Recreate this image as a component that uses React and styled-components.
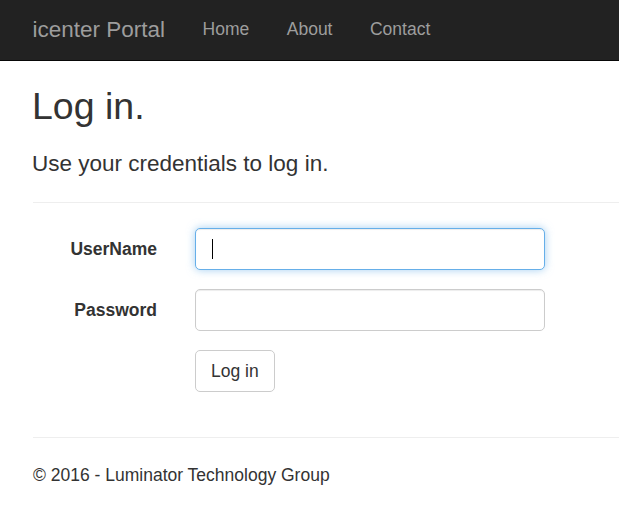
import styled, { createGlobalStyle } from "styled-components";

const GlobalStyle = createGlobalStyle`
  html, body {
    margin: 0;
    padding: 0;
    background: #fff;
  }
  body {
    font-family: "Liberation Sans", Arial, sans-serif;
    font-size: 17.5px;
    color: #333;
  }
`;

export default function App() {
  return (
    <>
      <GlobalStyle />
      <Navbar>
        <Brand href="#">icenter Portal</Brand>
        <NavLink href="#">Home</NavLink>
        <NavLink href="#">About</NavLink>
        <NavLink href="#">Contact</NavLink>
      </Navbar>
      <Main>
        <Title>Log in.</Title>
        <Subtitle>Use your credentials to log in.</Subtitle>
        <Rule />
        <Form onSubmit={(e) => e.preventDefault()}>
          <FormRow>
            <Label htmlFor="user">UserName</Label>
            <InputWrap>
              <Input id="user" type="text" $focused />
              <Caret />
            </InputWrap>
          </FormRow>
          <FormRow>
            <Label htmlFor="pass">Password</Label>
            <Input id="pass" type="password" />
          </FormRow>
          <FormRow>
            <Label as="span" />
            <Button type="submit">Log in</Button>
          </FormRow>
        </Form>
        <FooterRule />
        <Footer>© 2016 - Luminator Technology Group</Footer>
      </Main>
    </>
  );
}

const Navbar = styled.nav`
  height: 61px;
  box-sizing: border-box;
  background: #222;
  border-bottom: 1px solid #080808;
  display: flex;
  align-items: center;
  padding: 0 0 0 32.5px;
`;

const Brand = styled.a`
  font-size: 22.5px;
  line-height: 22.5px;
  color: #9d9d9d;
  text-decoration: none;
  margin-right: 18.75px;
`;

const NavLink = styled.a`
  font-size: 17.5px;
  line-height: 17.5px;
  color: #9d9d9d;
  text-decoration: none;
  padding: 0 18.75px;
`;

const Main = styled.main`
  padding-left: 33px;
`;

const Title = styled.h1`
  font-size: 37.5px;
  font-weight: 500;
  line-height: 1.1;
  margin: 25.4px 0 0 -1px;
`;

const Subtitle = styled.h4`
  font-size: 22.5px;
  font-weight: 500;
  line-height: 1.1;
  margin: 24.2px 0 0 -1px;
`;

const Rule = styled.hr`
  border: 0;
  border-top: 1px solid #eee;
  margin: 25.4px 0 0;
`;

const Form = styled.form`
  display: flex;
  flex-direction: column;
  gap: 19px;
  margin-top: 25px;
`;

const FormRow = styled.div`
  display: flex;
  align-items: center;
  gap: 38px;
`;

const Label = styled.label`
  width: 124px;
  text-align: right;
  font-weight: bold;
  font-size: 17.5px;
  padding-top: 1px;
`;

const InputWrap = styled.div`
  position: relative;
`;

const Input = styled.input`
  display: block;
  width: 350px;
  height: 42px;
  box-sizing: border-box;
  padding: 7px 15px;
  font-family: inherit;
  font-size: 17.5px;
  color: #555;
  background: #fff;
  border: 1px solid ${(p) => (p.$focused ? "#66afe9" : "#ccc")};
  border-radius: 5px;
  box-shadow: ${(p) =>
    p.$focused
      ? "inset 0 1px 1px rgba(0,0,0,.075), 0 0 8px rgba(102,175,233,.6)"
      : "inset 0 1px 1px rgba(0,0,0,.075)"};
  outline: none;
`;

const Caret = styled.span`
  position: absolute;
  left: 17px;
  top: 11px;
  width: 1px;
  height: 20px;
  background: #000;
`;

const Button = styled.button`
  height: 42px;
  box-sizing: border-box;
  padding: 1px 15px 0;
  font-family: inherit;
  font-size: 17.5px;
  color: #333;
  background: #fff;
  border: 1px solid #ccc;
  border-radius: 5px;
  cursor: pointer;
`;

const FooterRule = styled.hr`
  border: 0;
  border-top: 1px solid #eee;
  margin: 45px 0 0;
`;

const Footer = styled.p`
  font-size: 17.5px;
  line-height: 25px;
  margin: 25.4px 0 0;
`;
